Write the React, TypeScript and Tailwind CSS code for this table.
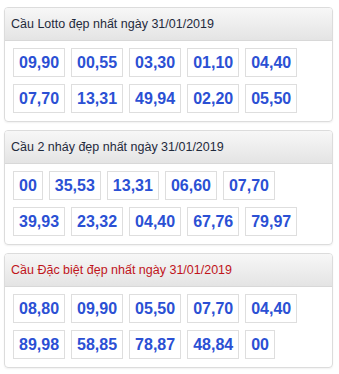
import React from "react";

const panels: { title: string; red?: boolean; nums: string[] }[] = [
  {
    title: "Cầu Lotto đẹp nhất ngày 31/01/2019",
    nums: ["09,90", "00,55", "03,30", "01,10", "04,40", "07,70", "13,31", "49,94", "02,20", "05,50"],
  },
  {
    title: "Cầu 2 nháy đẹp nhất ngày 31/01/2019",
    nums: ["00", "35,53", "13,31", "06,60", "07,70", "39,93", "23,32", "04,40", "67,76", "79,97"],
  },
  {
    title: "Cầu Đặc biệt đẹp nhất ngày 31/01/2019",
    red: true,
    nums: ["08,80", "09,90", "05,50", "07,70", "04,40", "89,98", "58,85", "78,87", "48,84", "00"],
  },
];

export default function App() {
  return (
    <div
      className="w-[339px] h-[374px] bg-white pt-[7px] pl-[4px] pr-[6px] flex flex-col gap-[8px]"
      style={{ fontFamily: '"Liberation Sans", Arial, sans-serif' }}
    >
      {panels.map((p, i) => (
        <div key={i} className="border border-[#dcdcdc] rounded-[4px] overflow-hidden shadow-[0_1px_2px_rgba(0,0,0,0.06)]">
          <div className="h-[33px] flex items-center pl-[6px] bg-gradient-to-b from-[#f7f7f7] to-[#e4e4e4] border-b border-[#d8d8d8]">
            <span className={`text-[12.5px] ${p.red ? "text-[#c0141b]" : "text-[#1f2a3c]"}`}>{p.title}</span>
          </div>
          <div className="flex flex-wrap gap-x-[6px] gap-y-[7px] pt-[7px] pb-[8px] pl-[8px] pr-[4px]">
            {p.nums.map((n, j) => (
              <div
                key={j}
                className="h-[29px] px-[5px] border border-[#dedede] flex items-center justify-center text-[16px] font-bold text-[#2b50d4] leading-none"
              >
                {n}
              </div>
            ))}
          </div>
        </div>
      ))}
    </div>
  );
}
